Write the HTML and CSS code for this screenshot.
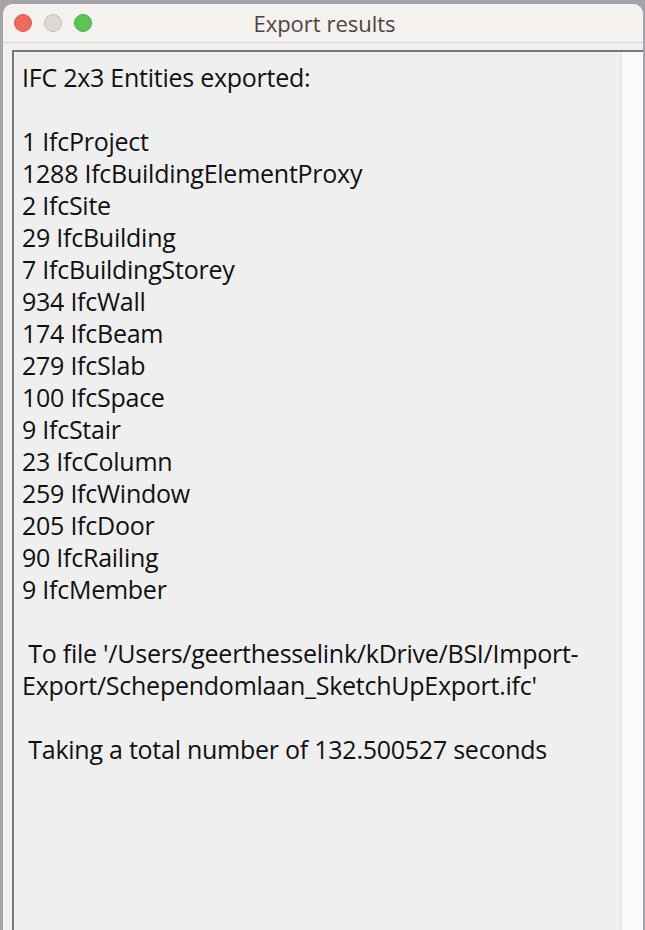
FILE: index.html
```html
<!DOCTYPE html>
<html>
<head>
<meta charset="utf-8">
<link rel="stylesheet" href="styles.css">
</head>
<body>
<div class="window">
  <div class="titlebar">
    <div class="lights">
      <span class="light red"></span>
      <span class="light gray"></span>
      <span class="light green"></span>
    </div>
    <div class="title">Export results</div>
  </div>
  <div class="content">
    <div class="field">
      <div class="text">IFC 2x3 Entities exported:

1 IfcProject
1288 IfcBuildingElementProxy
2 IfcSite
29 IfcBuilding
7 IfcBuildingStorey
934 IfcWall
174 IfcBeam
279 IfcSlab
100 IfcSpace
9 IfcStair
23 IfcColumn
259 IfcWindow
205 IfcDoor
90 IfcRailing
9 IfcMember

 To file '/Users/geerthesselink/kDrive/BSI/Import-
Export/Schependomlaan_SketchUpExport.ifc'

 Taking a total number of 132.500527 seconds</div>
      <div class="scrollbar"></div>
    </div>
  </div>
</div>
</body>
</html>
```
FILE: styles.css
```css
html, body {
  margin: 0;
  padding: 0;
  height: 100%;
  overflow: hidden;
}
body {
  background: #a5a4ab;
}
.window {
  margin: 4px 2px 0 3px;
  height: 926px;
  background: #f0f0f0;
  border-radius: 10px 10px 0 0;
  overflow: hidden;
  display: flex;
  flex-direction: column;
}
.titlebar {
  position: relative;
  height: 38px;
  background: #f5f1ee;
  border-bottom: 1px solid #d9d5d3;
  display: flex;
  align-items: center;
  justify-content: center;
  flex-shrink: 0;
}
.lights {
  position: absolute;
  left: 11px;
  top: 10px;
  display: flex;
  gap: 12px;
}
.light {
  box-sizing: border-box;
  width: 18px;
  height: 18px;
  border-radius: 50%;
  border: 1px solid transparent;
}
.red { background: #ee6a5f; border-color: #d85a50; }
.gray { background: #dcd9d7; border-color: #c2bebb; }
.green { background: #5dc453; border-color: #4eae45; }
.title {
  font-family: "Open Sans", "Liberation Sans", sans-serif;
  font-size: 22px;
  color: #4b4644;
  margin-left: 3px;
}
.content {
  flex: 1;
  padding: 7px 0 0 9px;
  display: flex;
  min-height: 0;
}
.field {
  flex: 1;
  display: flex;
  border-left: 2px solid #777777;
  border-top: 2px solid #777777;
  background: #efefef;
}
.text {
  flex: 1;
  padding: 9px 0 0 8px;
  white-space: pre;
  font-family: "Open Sans", "Liberation Sans", sans-serif;
  font-size: 25px;
  line-height: 32px;
  letter-spacing: -0.25px;
  color: #111111;
}
.scrollbar {
  width: 21px;
  background: #fafafa;
  border-left: 2px solid #e6e6e6;
}
```
